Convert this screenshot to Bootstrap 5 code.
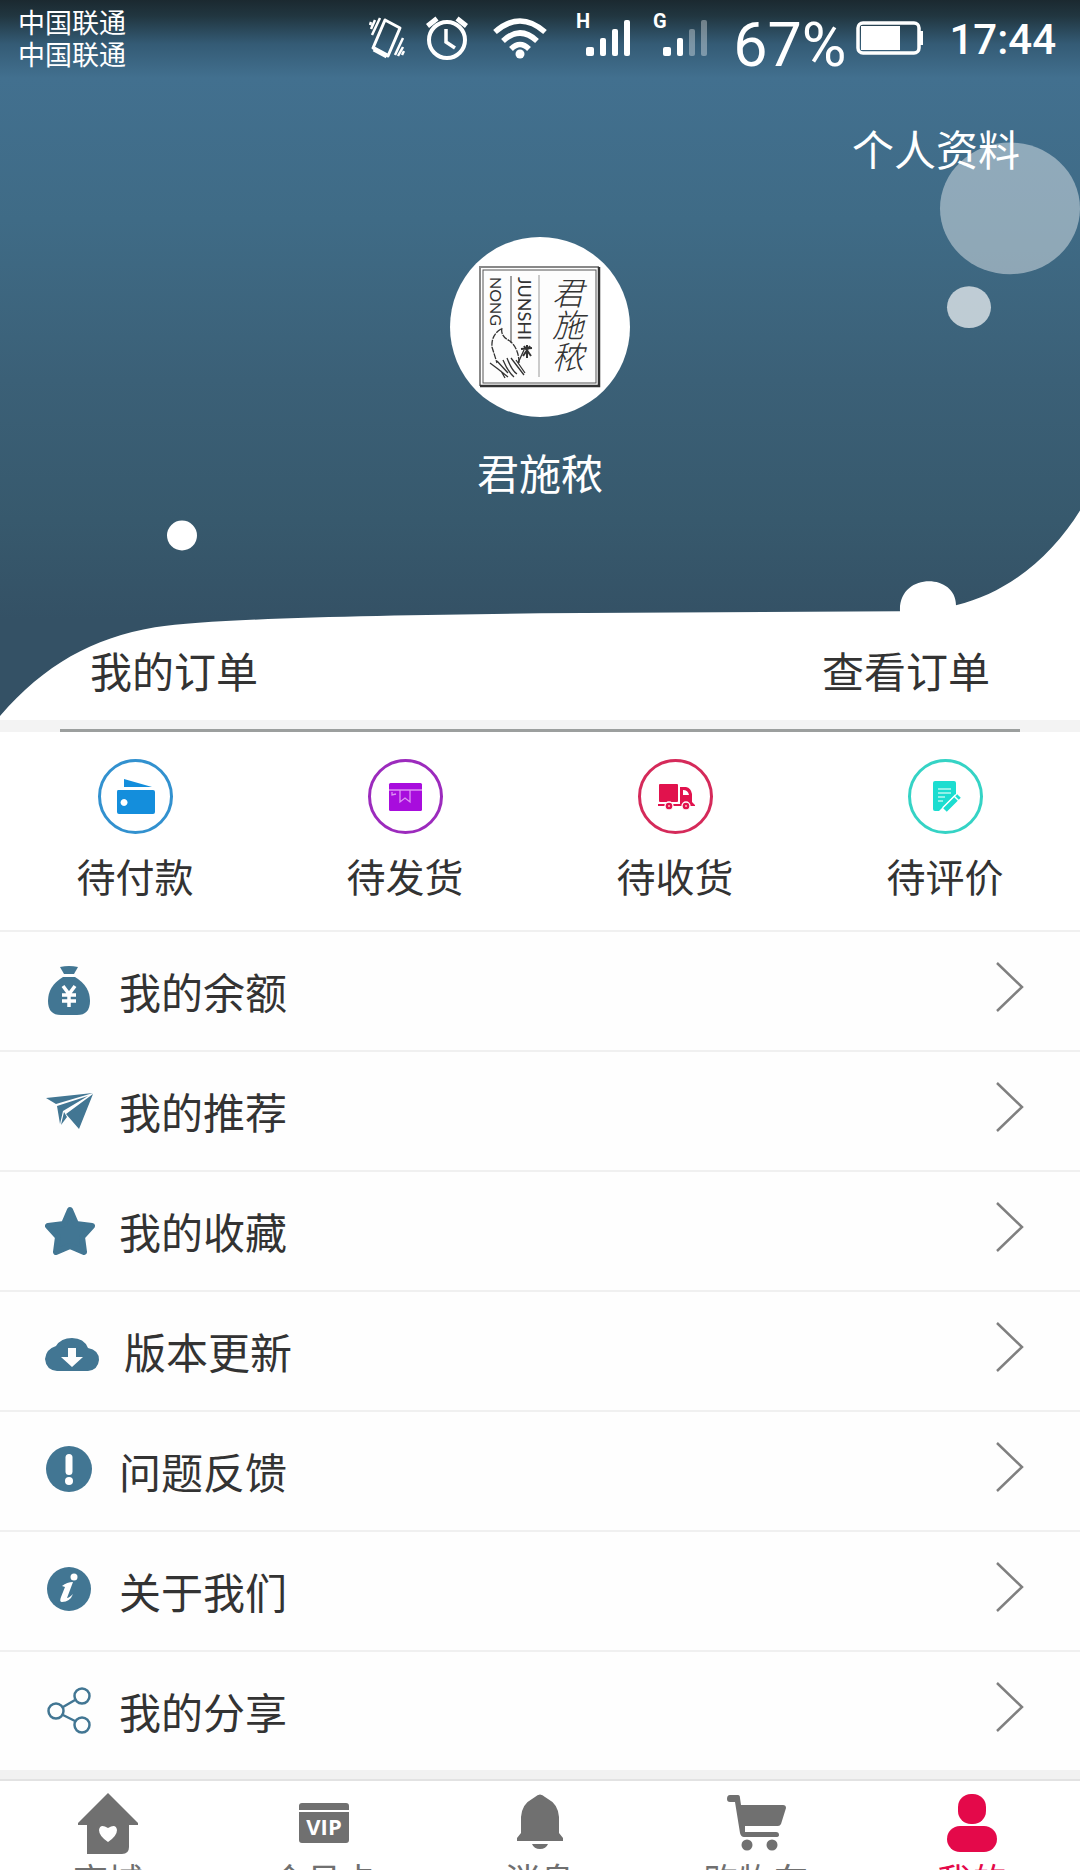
<!DOCTYPE html>
<html lang="zh-CN">
<head>
<meta charset="utf-8">
<meta name="viewport" content="width=device-width, initial-scale=1">
<title>我的</title>
<link href="https://cdn.jsdelivr.net/npm/bootstrap@5.3.0/dist/css/bootstrap.min.css" rel="stylesheet">
<style>
  body { font-family: "Noto Sans CJK SC", "Noto Sans", sans-serif; font-size: 42px; line-height: 56px; color: #333; background: #fff; }
  svg { display: block; flex: none; }
  a { color: inherit; text-decoration: none; }
  .hero { background: linear-gradient(#1b2930 0, #213640 16px, #345b75 44px, #42708f 78px, #3f6b86 220px, #3b6077 380px, #37596d 520px, #345165 620px); color: #fff; }
  .hero-shape { z-index: 0; }
  .hero-body { z-index: 1; }
  .statusbar { height: 76px; padding: 0 24px 0 18px; font-family: Roboto, "Noto Sans CJK SC", sans-serif; }
  .status-icons { gap: 21px; padding-right: 24px; }
  .carrier { font-size: 27px; line-height: 32px; padding-top: 4px; }
  .percent { font-size: 61px; line-height: 60px; padding-top: 14px; }
  .battery { margin: 0 25px 0 10px; }
  .clock { font-size: 42px; line-height: 42px; font-weight: 500; padding-top: 4px; }
  .profile-link { padding: 44px 60px 0; }
  .avatar { margin-top: 61px; }
  .seal-name { writing-mode: vertical-rl; }
  .nickname { margin-top: 27px; }
  .orders { color: #333; padding: 142px 90px 22px; }
  .strip { background: #f3f3f3; padding: 9px 60px 0; }
  .strip-line { height: 3px; background: #9c9f9e; }
  .kinds { padding: 27px 0; font-size: 39px; }
  .kinds a { gap: 13px; }
  .menu-row { height: 120px; padding: 0 56px 0 45px; border-top: 2px solid #f0f0f0; gap: 24px; background: #fefefe; }
  .menu-row .go { margin: 0 0 8px auto; }
  .menu-icon { color: #427693; }
  .tab-gap { height: 9px; background: #f1f1f1; }
  .tabs { border-top: 2px solid #e2e2e2; padding-top: 12px; font-size: 35px; line-height: 44px; color: #707070; }
  .tabs a { gap: 2px; }
  .tabs .current { color: #e4094a; }
</style>
<script src="https://cdn.jsdelivr.net/npm/bootstrap@5.3.0/dist/js/bootstrap.bundle.min.js"></script>
</head>
<body class="vh-100 overflow-hidden">

<header class="hero position-relative">
  <svg class="hero-shape position-absolute top-0 start-0 w-100 h-100" viewBox="0 -2 1080 722" preserveAspectRatio="none" aria-hidden="true">
    <ellipse cx="1010" cy="207" rx="70" ry="66" fill="#fff" fill-opacity=".42"/>
    <ellipse cx="969" cy="306" rx="22" ry="21" fill="#fff" fill-opacity=".67"/>
    <ellipse cx="182" cy="535" rx="15" ry="15" fill="#fff"/>
    <path fill="#fff" d="M0 716C45 664 92 638 155 627C225 617 400 615 540 613L900 611C898 572 956 572 956 605C1010 592 1053 554 1080 510V721H0Z"/>
  </svg>
  <div class="hero-body position-relative">
    <div class="statusbar d-flex align-items-center">
      <div class="carrier me-auto">中国联通<br>中国联通</div>
      <div class="status-icons d-flex align-items-center">
        <svg width="36" height="42" viewBox="0 0 36 42" fill="none" stroke="#fff" stroke-linejoin="round">
          <path stroke-width="3" d="M16 3L31 11L19 39L4 31Z"/><path stroke-width="5" d="M5 32L18 39"/>
          <path stroke-width="2.500" d="M11 1L3 18M6 3L2 12M2 5L1 8M34 21L26 38M34 30L29 39M35 34L33 38"/>
        </svg>
        <svg width="42" height="44" viewBox="0 0 42 44" fill="none" stroke="#fff">
          <circle cx="21" cy="24" r="18" stroke-width="4"/><path stroke-width="3.500" d="M20 13V26L29 32"/><path stroke-width="5" d="M1.500 10L11 2.500M31 2.500L40.500 10"/>
        </svg>
        <svg class="ms-1" width="54" height="42" viewBox="0 0 54 42" fill="none" stroke="#fff" stroke-width="5.500">
          <path d="M2 15Q27-7 52 15M10 24Q27 8 44 24M18 32Q27 23 36 32"/><circle cx="27" cy="37" r="4.500" fill="#fff" stroke="none"/>
        </svg>
        <svg class="ms-2" width="56" height="56" viewBox="0 -2 56 56" fill="#fff">
          <text x="0" y="16" font-family="Roboto" font-size="20" font-weight="700">H</text>
          <rect x="10" y="35" width="8" height="9" rx="2"/><rect x="24" y="26" width="6" height="18" rx="2"/><rect x="36" y="17" width="6" height="27" rx="2"/><rect x="48" y="8" width="6" height="36" rx="2"/>
        </svg>
        <svg width="56" height="56" viewBox="0 -2 56 56" fill="#fff">
          <text x="0" y="16" font-family="Roboto" font-size="20" font-weight="700">G</text>
          <rect x="10" y="35" width="8" height="9" rx="2"/><rect x="24" y="26" width="6" height="18" rx="2"/><g opacity=".35"><rect x="36" y="17" width="6" height="27" rx="2"/><rect x="48" y="8" width="6" height="36" rx="2"/></g>
        </svg>
      </div>
      <span class="percent">67%</span>
      <svg class="battery" width="68" height="36" viewBox="0 0 68 36">
        <rect x="2" y="3" width="61" height="30" rx="5" fill="none" stroke="#fff" stroke-width="3.500"/><rect x="5" y="6" width="39" height="24" fill="#fff"/><path d="M63 11h4v14h-4z" fill="#fff"/>
      </svg>
      <span class="clock">17:44</span>
    </div>
    <div class="profile-link text-end"><a href="#">个人资料</a></div>
    <svg class="avatar mx-auto" width="180" height="180" viewBox="450 237 180 180" role="img" aria-label="君施秾">
      <circle cx="540" cy="327" r="90" fill="#fff"/>
      <path fill="none" stroke="#888" stroke-width="2" d="M480 386V267H599"/><path fill="none" stroke="#333" stroke-width="2.500" d="M480 386H599V267"/>
      <rect x="483" y="270" width="113" height="113" fill="#fdfdfd" stroke="#555"/>
      <path stroke="#444" d="M511 276V343"/><path stroke="#999" d="M539 275V377"/>
      <g fill="#333" font-family="Lato, sans-serif"><text font-size="16" transform="translate(490 277) rotate(90)">NONG</text><text font-size="18" transform="translate(518 277) rotate(90)">JUNSHI</text></g>
      <text class="seal-name" x="568" y="277" fill="#333" font-family="Noto Sans CJK SC, sans-serif" font-size="32" font-style="italic" font-weight="300">君施秾</text>
      <g fill="none" stroke="#333" stroke-width="1.300"><path d="M501 329Q491 335 492 347L497 363M502 328Q500 336 510 341Q519 349 519 363" stroke-dasharray="6 1"/><path d="M490 363L498 369L508 377M497 361L508 373M503 360Q508 372 514 377M507 358Q512 371 517 374M511 358L524 375M516 360L525 373M501 371L505 378M518 363L524 350"/><path stroke-width="2" d="M521 349L532 348M523 356L530 346M524 346L531 356M527 345V358"/></g>
    </svg>
    <div class="nickname text-center">君施秾</div>
    <div class="orders d-flex justify-content-between"><span>我的订单</span><a href="#">查看订单</a></div>
  </div>
</header>

<div class="strip"><div class="strip-line"></div></div>

<nav class="kinds row g-0" aria-label="订单">
  <a class="col d-flex flex-column align-items-center" href="#">
    <svg width="75" height="75" viewBox="0 0 75 75"><circle cx="37.500" cy="37.500" r="36" fill="none" stroke="#3291cf" stroke-width="3"/><g fill="#148edc"><path d="M26 20L54 28H26Z"/><path fill-rule="evenodd" d="M20 31H55Q57 31 57 33V53Q57 55 55 55H21Q19 55 19 53V33Q19 31 20 31ZM26 40a3.500 3.500 0 1 0 .1 0Z"/></g></svg>
    <span>待付款</span></a>
  <a class="col d-flex flex-column align-items-center" href="#">
    <svg width="75" height="75" viewBox="0 0 75 75"><circle cx="37.500" cy="37.500" r="36" fill="none" stroke="#9c2bbd" stroke-width="3"/><rect x="21" y="24" width="33" height="28" rx="1.500" fill="#a80ddd"/><g fill="none" stroke="#dd92f3" stroke-width="1.300"><path d="M21 31H54M32 31V43L37 39L42 43V31M24 33V36L28 35"/></g></svg>
    <span>待发货</span></a>
  <a class="col d-flex flex-column align-items-center" href="#">
    <svg width="75" height="75" viewBox="0 0 75 75"><circle cx="37.500" cy="37.500" r="36" fill="none" stroke="#d52a5a" stroke-width="3"/><g fill="#e1124d"><rect x="21" y="25" width="19" height="18" rx="1"/><path fill-rule="evenodd" d="M42 28H48Q53 29 54 35V43L57 46V47H20V45H42ZM45 31V36H51Q50 31 45 31Z"/><g stroke="#fff" stroke-width="1.300"><circle cx="31" cy="47" r="4"/><circle cx="48" cy="47" r="4"/></g></g><g fill="#fbb"><circle cx="31" cy="47" r="1"/><circle cx="48" cy="47" r="1"/></g></svg>
    <span>待收货</span></a>
  <a class="col d-flex flex-column align-items-center" href="#">
    <svg width="75" height="75" viewBox="0 0 75 75"><circle cx="37.500" cy="37.500" r="36" fill="none" stroke="#35d3c5" stroke-width="3"/><path fill="#1cddd0" d="M27 22H46Q48 22 48 24V35L31 52H27Q25 52 25 50V24Q25 22 27 22Z"/><path d="M30 30H43M30 34H43M30 38H37M30 42H35" stroke="#b8f6ef" stroke-width="1.700"/><path d="M37 51L50 38" stroke="#fff" stroke-width="8"/><path d="M37 51L48 40M49 39L51 37" stroke="#1cddd0" stroke-width="5"/></svg>
    <span>待评价</span></a>
</nav>

<main class="menu">
  <a class="menu-row d-flex align-items-center" href="#">
    <svg class="menu-icon" width="50" height="50" viewBox="0 0 50 50" fill="currentColor"><path d="M15 1Q24-1 33 1L29 8H19Z"/><path d="M18 11H30Q45 20 45 35Q45 49 32 49H16Q3 49 3 35Q3 20 18 11Z"/><path d="M18 20L24 28L30 20M24 28V41M17 29H31M17 35H31" fill="none" stroke="#fff" stroke-width="3.500"/></svg>
    <span>我的余额</span>
    <svg class="go" width="28" height="50" viewBox="0 0 28 50" fill="none" stroke="#808080" stroke-width="2.500"><path d="M1 1L26 25L1 49"/></svg></a>
  <a class="menu-row d-flex align-items-center" href="#">
    <svg class="menu-icon" width="50" height="50" viewBox="0 0 50 50" fill="currentColor"><path d="M1 12L48 7L11 18ZM48 8L34 43L21 28ZM12 20L43 10L18 25L15 38Z"/><path d="M16 39L19 26L22 31Z"/></svg>
    <span>我的推荐</span>
    <svg class="go" width="28" height="50" viewBox="0 0 28 50" fill="none" stroke="#808080" stroke-width="2.500"><path d="M1 1L26 25L1 49"/></svg></a>
  <a class="menu-row d-flex align-items-center" href="#">
    <svg class="menu-icon" width="50" height="50" viewBox="0 0 50 50" fill="currentColor" stroke="currentColor" stroke-width="6" stroke-linejoin="round"><path d="M25 4L31 18L47 20L37 31L39 46L25 40L11 46L13 31L3 20L19 18Z"/></svg>
    <span>我的收藏</span>
    <svg class="go" width="28" height="50" viewBox="0 0 28 50" fill="none" stroke="#808080" stroke-width="2.500"><path d="M1 1L26 25L1 49"/></svg></a>
  <a class="menu-row d-flex align-items-center" href="#">
    <svg class="menu-icon" width="55" height="50" viewBox="0 0 55 50" fill="currentColor"><path fill-rule="evenodd" d="M12 45Q1 44 0 33Q1 23 11 20Q16 12 27 12Q39 12 43 22Q54 24 54 34Q53 44 43 45ZM23 22V31H16L27 41L38 31H31V22Z"/></svg>
    <span>版本更新</span>
    <svg class="go" width="28" height="50" viewBox="0 0 28 50" fill="none" stroke="#808080" stroke-width="2.500"><path d="M1 1L26 25L1 49"/></svg></a>
  <a class="menu-row d-flex align-items-center" href="#">
    <svg class="menu-icon" width="50" height="50" viewBox="0 0 50 50" fill="currentColor"><circle cx="24" cy="23" r="23"/><rect x="20.500" y="8" width="7" height="21" rx="3.500" fill="#fff"/><circle cx="24" cy="35" r="4" fill="#fff"/></svg>
    <span>问题反馈</span>
    <svg class="go" width="28" height="50" viewBox="0 0 28 50" fill="none" stroke="#808080" stroke-width="2.500"><path d="M1 1L26 25L1 49"/></svg></a>
  <a class="menu-row d-flex align-items-center" href="#">
    <svg class="menu-icon" width="50" height="50" viewBox="0 0 50 50" fill="currentColor"><circle cx="24" cy="23" r="22"/><circle cx="29" cy="11" r="3.500" fill="#fff"/><path d="M17 20Q22 16 28 16L22 32Q24 32 28 28Q25 36 17 36Q14 36 16 31L20 21Z" fill="#fff"/></svg>
    <span>关于我们</span>
    <svg class="go" width="28" height="50" viewBox="0 0 28 50" fill="none" stroke="#808080" stroke-width="2.500"><path d="M1 1L26 25L1 49"/></svg></a>
  <a class="menu-row d-flex align-items-center" href="#">
    <svg class="menu-icon" width="50" height="50" viewBox="0 0 50 50" fill="none" stroke="currentColor" stroke-width="2.500"><circle cx="11" cy="25" r="7.500"/><circle cx="37" cy="10" r="7.500"/><circle cx="37" cy="39" r="7.500"/><path d="M18 21L30 14M18 29L30 35"/></svg>
    <span>我的分享</span>
    <svg class="go" width="28" height="50" viewBox="0 0 28 50" fill="none" stroke="#808080" stroke-width="2.500"><path d="M1 1L26 25L1 49"/></svg></a>
</main>

<div class="tab-gap"></div>
<nav class="tabs row g-0" aria-label="主导航">
  <a class="col d-flex flex-column align-items-center" href="#">
    <svg width="60" height="62" viewBox="0 0 60 62" fill="currentColor"><path d="M30 0L60 30V32H51V54Q51 61 44 61H9V32H0V30Z"/><path fill="#fff" d="M30 49Q21 43 21 37Q22 30 30 35Q38 30 39 37Q39 43 30 49Z"/></svg>
    <span>商城</span></a>
  <a class="col d-flex flex-column align-items-center" href="#">
    <svg width="60" height="62" viewBox="0 0 60 62" fill="currentColor"><path d="M5 17V13Q5 10 8 10H52Q55 10 55 13V17ZM5 19H55V47Q55 50 52 50H8Q5 50 5 47Z"/><text x="30" y="42" text-anchor="middle" font-family="Open Sans" font-size="22" font-weight="700" fill="#fff">VIP</text></svg>
    <span>会员卡</span></a>
  <a class="col d-flex flex-column align-items-center" href="#">
    <svg width="60" height="62" viewBox="0 0 60 62" fill="currentColor"><path d="M25 4Q30-1 35 4L38 6Q48 11 49 24V40L53 45V48H7V45L11 40V24Q12 11 22 6ZM22 51H38Q36 56 30 56Q24 56 22 51Z"/></svg>
    <span>消息</span></a>
  <a class="col d-flex flex-column align-items-center" href="#">
    <svg width="60" height="62" viewBox="0 0 60 62" fill="currentColor"><path d="M4 2H12Q14 2 14 5L15 12H57Q60 12 60 15L55 31Q54 33 52 33H19V39H50Q53 39 53 42Q53 44 50 44H18Q15 44 14 40L9 9H4Q1 9 1 6Q1 2 4 2Z"/><circle cx="21" cy="52" r="5.500"/><circle cx="46" cy="52" r="5.500"/></svg>
    <span>购物车</span></a>
  <a class="col d-flex flex-column align-items-center current" href="#" aria-current="page">
    <svg width="60" height="62" viewBox="0 0 60 62" fill="currentColor"><rect x="16" y="1" width="28" height="30" rx="13"/><rect x="5" y="33" width="50" height="26" rx="13"/></svg>
    <span>我的</span></a>
</nav>
</body>
</html>
